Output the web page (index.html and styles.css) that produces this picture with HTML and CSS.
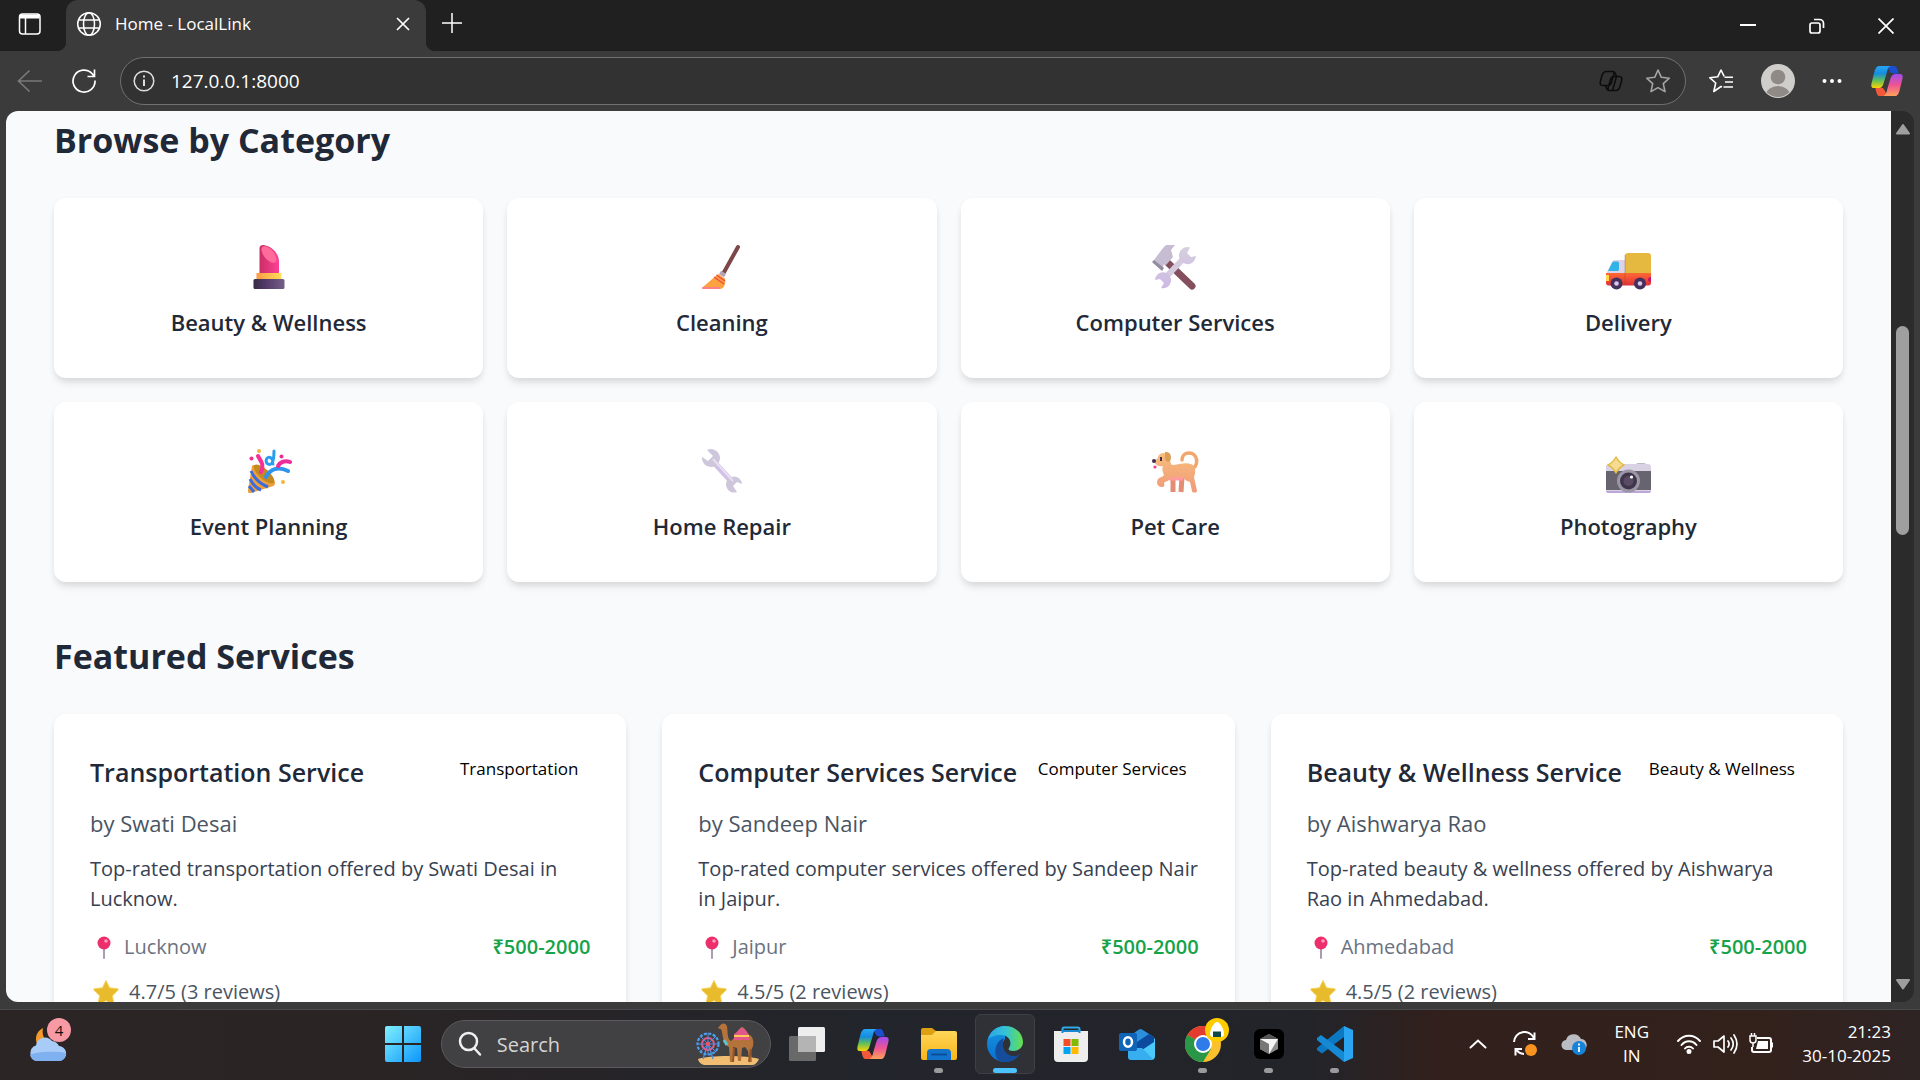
FILE: index.html
```html
<!DOCTYPE html>
<html lang="en">
<head>
<meta charset="utf-8">
<title>Home - LocalLink</title>
<link rel="stylesheet" href="styles.css">
</head>
<body>
<svg class="defs" width="0" height="0" aria-hidden="true">
  <defs>
    <linearGradient id="pink" x1="0" x2="1"><stop offset="0" stop-color="#c92f63"/><stop offset="1" stop-color="#ff4098"/></linearGradient>
    <linearGradient id="gold" x1="0" x2="1"><stop offset="0" stop-color="#ff9a45"/><stop offset="1" stop-color="#ffe05a"/></linearGradient>
    <linearGradient id="plum" x1="0" x2="1"><stop offset="0" stop-color="#382b46"/><stop offset=".4" stop-color="#543a68"/><stop offset="1" stop-color="#75608a"/></linearGradient>
    <linearGradient id="red" x1="0" x2="0" y1="0" y2="1"><stop offset="0" stop-color="#fd6a34"/><stop offset="1" stop-color="#e2303a"/></linearGradient>
    <linearGradient id="steel" x1="0" x2="0" y1="0" y2="1"><stop offset="0" stop-color="#d5cfdf"/><stop offset="1" stop-color="#cdb9e4"/></linearGradient>
    <linearGradient id="dog" x1="0" x2="0" y1="0" y2="1"><stop offset="0" stop-color="#f7bd7d"/><stop offset="1" stop-color="#f19a78"/></linearGradient>
    <linearGradient id="cpA" x1="0" x2="0" y1="0" y2="1"><stop offset="0" stop-color="#26a8f4"/><stop offset=".35" stop-color="#158ce0"/><stop offset=".65" stop-color="#5fbe5b"/><stop offset="1" stop-color="#ffd400"/></linearGradient>
    <linearGradient id="cpB" x1="0" x2="0" y1="0" y2="1"><stop offset="0" stop-color="#a04bf0"/><stop offset=".5" stop-color="#ee5593"/><stop offset="1" stop-color="#ffa25a"/></linearGradient>
    <linearGradient id="edgeA" x1="0" x2="1"><stop offset="0" stop-color="#2ea3e8"/><stop offset=".5" stop-color="#33c3d6"/><stop offset="1" stop-color="#66e04c"/></linearGradient>
    <linearGradient id="edgeB" x1="0" x2="0" y1="0" y2="1"><stop offset="0" stop-color="#1596e0"/><stop offset="1" stop-color="#0a6fd0"/></linearGradient>
    <linearGradient id="win" x1="0" x2="1" y1="0" y2="1"><stop offset="0" stop-color="#7ff0ff"/><stop offset="1" stop-color="#0d96fa"/></linearGradient>
    <linearGradient id="folder" x1="0" x2="0" y1="0" y2="1"><stop offset="0" stop-color="#ffd659"/><stop offset="1" stop-color="#f9b51a"/></linearGradient>
    <symbol id="copilot" viewBox="0 0 36 36">
      <path d="M17 2h8c3 0 3.500 2 4.500 5l1 3h-6c-3 0-4-3-5-5z" fill="#1b4fd0"/>
      <path d="M19 34h-8c-3 0-3.500-2-4.500-5l-1-4h6c3 0 4 3 5 5z" fill="#f4583a"/>
      <path d="M10 2h12c-3 1-3.500 4-4.500 8l-3 10c-1 4-3 5.500-6 5.500H4C1 25.500 1 22 2 19L5 7c1-3 2.500-5 5-5z" fill="url(#cpA)"/>
      <path d="M26 34H14c3-1 3.500-4 4.500-8l3-10c1-4 3-5.500 6-5.500H32c3 0 3 3.500 2 6.500l-3 12c-1 3-2.500 5-5 5z" fill="url(#cpB)"/>
    </symbol>
    <symbol id="pin" viewBox="0 0 24 24">
      <path d="M12 12v11" stroke="#a99bb8" stroke-width="2" stroke-linecap="round"/>
      <circle cx="12" cy="8" r="6.500" fill="#ec2f6c"/><circle cx="14" cy="6" r="1.800" fill="#ff9cbc"/>
    </symbol>
    <symbol id="star" viewBox="0 0 26 26">
      <path d="M13 1.500l3.500 7.300 8 1c.8.200 1 .8.500 1.400l-5.600 5.600 1.400 7.600c.1 1-.6 1.400-1.400 1L13 21.600l-6.400 3.800c-.8.400-1.500 0-1.400-1l1.400-7.600L1 11.200c-.5-.6-.3-1.200.5-1.400l8-1z" fill="#e8bb2c" stroke="#f7d052" stroke-width="1"/>
    </symbol>
  </defs>
</svg>

<header class="browser">
  <div class="titlebar">
    <button class="tab-actions" aria-label="Tab actions">
      <svg width="24" height="24" viewBox="0 0 24 24" fill="none" stroke="#fff" stroke-width="1.500"><rect x="1.500" y="2" width="20.500" height="20" rx="3"/><path d="M2 4.500h19.500" stroke-width="4"/><path d="M7.500 6v16"/></svg>
    </button>
    <div class="tab">
      <svg width="26" height="26" viewBox="0 0 26 26" fill="none" stroke="#fff" stroke-width="1.500"><circle cx="13" cy="13" r="11.300"/><ellipse cx="13" cy="13" rx="5.500" ry="11.300"/><path d="M3 9h20M3 17h20"/></svg>
      <span class="tab-title">Home - LocalLink</span>
      <button class="tab-close" aria-label="Close tab"><svg width="14" height="14" viewBox="0 0 14 14" stroke="#fff" stroke-width="1.700"><path d="M1 1l12 12M13 1L1 13"/></svg></button>
    </div>
    <button class="new-tab" aria-label="New tab"><svg width="22" height="22" viewBox="0 0 22 22" stroke="#fff" stroke-width="1.500"><path d="M11 1v20M1 11h20"/></svg></button>
    <div class="window-controls">
      <button aria-label="Minimize"><svg width="16" height="16" viewBox="0 0 16 16" stroke="#fff" stroke-width="2"><path d="M0 7h16"/></svg></button>
      <button aria-label="Restore"><svg width="16" height="16" viewBox="0 0 16 16" fill="none" stroke="#fff" stroke-width="1.700"><rect x="1" y="5" width="10" height="10" rx="2"/><path d="M5 1.500h5.500a4 4 0 0 1 4 4V10"/></svg></button>
      <button aria-label="Close"><svg width="16" height="16" viewBox="0 0 16 16" stroke="#fff" stroke-width="1.700"><path d="M.5.500l15 15M15.500.500l-15 15"/></svg></button>
    </div>
  </div>
  <div class="toolbar">
    <button aria-label="Back"><svg width="26" height="24" viewBox="0 0 26 24" fill="none" stroke="#7a7a7a" stroke-width="1.600"><path d="M25 12H1.500M12.500 1.500L1.500 12l11 10.500"/></svg></button>
    <button aria-label="Refresh"><svg width="26" height="26" viewBox="0 0 26 26" fill="none" stroke="#fff" stroke-width="1.700"><path d="M24 12.500A11 11 0 1 1 21 5.500l2 2.500M23.500 1.500v7H16.500"/></svg></button>
    <div class="address">
      <svg width="22" height="22" viewBox="0 0 22 22" fill="none" stroke="#ddd" stroke-width="1.500"><circle cx="11" cy="11" r="9.800"/><path d="M11 9.500V16M11 5.500v2" stroke-width="2"/></svg>
      <input class="url" type="text" aria-label="Address" value="127.0.0.1:8000">
      <button aria-label="Copilot page actions"><svg width="24" height="22" viewBox="0 0 24 22" fill="none" stroke="#0c0c0c" stroke-width="1.500"><path d="M7.500 1.500h6c2 0 1.500 2 1 4l-2 7c-.6 2-1.500 3-3.500 3H4c-3 0-3.200-2-2.500-4.500L3 5.500c.7-2.500 2-4 4.500-4zM16.500 20.500h-6c-2 0-1.500-2-1-4l2-7c.6-2 1.500-3 3.500-3h5c3 0 3.200 2 2.500 4.500L21 16.500c-.7 2.500-2 4-4.500 4zM14 1.500c2 0 2.500 2 3.500 5M10 20.500c-2 0-2.500-2-3.500-5M17.500 6.500l-4 14"/></svg></button>
      <button aria-label="Add to favorites"><svg width="26" height="26" viewBox="0 0 26 26" fill="none" stroke="#a5a5a5" stroke-width="1.600" stroke-linejoin="round"><path d="M13 2l3.300 7.300 8 .9-6 5.400 1.700 8L13 19.600l-7 4 1.700-8-6-5.400 8-.9z"/></svg></button>
    </div>
    <div class="toolbar-actions">
      <button aria-label="Favorites"><svg width="26" height="26" viewBox="0 0 26 26" fill="none" stroke="#fff" stroke-width="1.600" stroke-linejoin="round"><path d="M14 19l-1-.5-7.200 5 1.900-8.500-6-5.300 8-.9L13 2l3.200 6.300M16.500 9.200H25M17 14h8M15.500 19H25"/></svg></button>
      <button aria-label="Profile"><svg width="34" height="34" viewBox="0 0 34 34"><clipPath id="face"><circle cx="17" cy="17" r="16"/></clipPath><circle cx="17" cy="17" r="17" fill="#d0cecb"/><g clip-path="url(#face)" fill="#8f8a86"><circle cx="17" cy="13" r="7.300"/><ellipse cx="17" cy="31" rx="12" ry="9"/></g></svg></button>
      <button aria-label="Settings and more"><svg width="20" height="6" viewBox="0 0 20 6" fill="#fff"><circle cx="2.500" cy="3" r="2"/><circle cx="10" cy="3" r="2"/><circle cx="17.500" cy="3" r="2"/></svg></button>
      <button aria-label="Copilot"><svg width="36" height="34"><use href="#copilot"/></svg></button>
    </div>
  </div>
</header>

<div class="viewport">
  <main class="page">
    <section>
      <h2>Browse by Category</h2>
      <div class="categories">
        <a class="category" href="#">
          <svg viewBox="0 0 48 48"><path d="M14.500 30V5c0-2 2-3.200 4-3 8 1 15 8 15.500 16v12z" fill="url(#pink)"/><ellipse cx="24" cy="11.500" rx="5" ry="10" transform="rotate(-40 24 11.500)" fill="#ff6c9c"/><rect x="11.500" y="30" width="25" height="7" fill="url(#gold)"/><rect x="8.500" y="36" width="31" height="10" rx="1.500" fill="url(#plum)"/></svg>
          <h3>Beauty &amp; Wellness</h3>
        </a>
        <a class="category" href="#">
          <svg viewBox="0 0 48 48"><path d="M40 4L25 31" stroke="#7d4648" stroke-width="4" stroke-linecap="round"/><path d="M22 29.500l5 3" stroke="#b4a5b8" stroke-width="4"/><path d="M20 31l7 4.500c1 5-1 10.500-5 10.500H6c-1.500 0-2-1-1-2z" fill="#fca23f"/><path d="M5 45h16" stroke="#ff7f86" stroke-width="2" stroke-linecap="round"/><path d="M16 34l10 7M18.500 32l8.500 6" stroke="#f04b4b" stroke-width="1.300"/></svg>
          <h3>Cleaning</h3>
        </a>
        <a class="category" href="#">
          <svg viewBox="0 0 48 48"><path d="M17 20L41 43" stroke="#84505d" stroke-width="7" stroke-linecap="round"/><path d="M3 17l9-12 3-3h9l-4 5 2 7-7 8-2-1-2 6-9-7z" fill="#c6bdd3"/><path d="M3 17l10 8-2 3-10-9z" fill="#938ca1"/><path d="M13 36L36 12" stroke="#d4cbdf" stroke-width="6"/><path d="M39 4.500a8.500 8.500 0 1 0 6 8.500l-5 1-4-4zM10 45a8 8 0 1 0-6-8l5-1 4 4z" fill="url(#steel)"/></svg>
          <h3>Computer Services</h3>
        </a>
        <a class="category" href="#">
          <svg viewBox="0 0 48 48"><path d="M2 31l6-12c.7-1.300 1.500-2 3-2h12v15H2z" fill="#ddd2e8"/><path d="M4 28l4-8c.5-1 1-1.500 2-1.500h3c1.500 0 2 .5 2 2V26c0 1.500-.5 2-2 2z" fill="#30b4e8"/><rect x="21" y="10" width="26" height="24" rx="3" fill="#e5b840"/><path d="M2 30h45v10c0 1.500-1 2.500-2.500 2.500h-40C3 42.500 2 41.500 2 40z" fill="url(#red)"/><rect x="2" y="32" width="3" height="6" fill="#ffd84b"/><path d="M21 12v30" stroke="#7d5320" stroke-opacity=".35"/><path d="M47 34a3 2.500 0 0 0 0 5z" fill="#c4146c"/><g fill="#45305c"><circle cx="12.500" cy="40.500" r="6"/><circle cx="36" cy="40.500" r="6"/></g><g fill="#d7c7ee"><circle cx="12.500" cy="40.500" r="2.300"/><circle cx="36" cy="40.500" r="2.300"/></g></svg>
          <h3>Delivery</h3>
        </a>
        <a class="category" href="#">
          <svg viewBox="0 0 48 48"><path d="M7 19c2-5 23 8 23 17 0 2-1 3-3 3.500L6 46c-2 .5-3.500-.5-3-3z" fill="#eda03c"/><ellipse cx="19" cy="27" rx="5" ry="13" transform="rotate(-48 19 27)" fill="#c48a20"/><path d="M6 24c4 9 9 13 17 16M5 32c3 6 6 9 11 11M4 39l5 6" fill="none" stroke="#3b6be0" stroke-width="3"/><path d="M16 25c4-7-1-12-3-16" fill="none" stroke="#f52f96" stroke-width="4" stroke-linecap="round"/><path d="M21 30c4-8 12-11 22-6" fill="none" stroke="#2f94ee" stroke-width="4" stroke-linecap="round"/><path d="M29 4c0 10-2 15-6 13s-1-9 3-6 0 5 2 6" fill="none" stroke="#2b9ded" stroke-width="3" stroke-linecap="round"/><path d="M33 19c2-4 7-6 12-4" fill="none" stroke="#ec2c9b" stroke-width="4" stroke-linecap="round"/><g fill="#f6b63c"><circle cx="14" cy="4" r="2"/><circle cx="38" cy="35" r="2"/></g><g fill="#ea2f90"><circle cx="6.500" cy="11.500" r="2"/><circle cx="36.500" cy="9.500" r="2"/></g></svg>
          <h3>Event Planning</h3>
        </a>
        <a class="category" href="#">
          <svg viewBox="0 0 48 48"><path d="M13 12l23 25" stroke="#d1c1e6" stroke-width="6"/><path d="M9 3a9 9 0 1 1-5 7l6 4 5-5zM39 45a8 8 0 1 1 5-8l-5-2-4 4z" fill="#cec6da"/><path d="M15 12l20 22" stroke="#e8e0f0" stroke-width="2"/></svg>
          <h3>Home Repair</h3>
        </a>
        <a class="category" href="#">
          <svg viewBox="0 0 48 48"><path d="M41 22c7-4 6-16-3-16-5 0-7 4-7 7" fill="none" stroke="#f2a66c" stroke-width="3.500" stroke-linecap="round"/><path d="M22 30v15M31 30l-1 15" stroke="#e38d72" stroke-width="5"/><path d="M3 14c1-1 3-1 4-4 1-4 6-5 10-3 3 2 1 8 4 11 6 0 13-3 19-1 5 2 5 8 3 13l3 14c0 2-5 2-5 0l-2-9c-3-1-5-2-7-4H22c-2 0-3 1-4 2-2 2-4 1-5 3 1 3 0 4-2 4-5 0-6-5-4-8 2-2 5-2 6-4-2-4-2-7-1-9-4 1-8-1-9-5z" fill="url(#dog)"/><path d="M14 5c6-1 7 5 5 9-2 2-5 0-5-3z" fill="#dc9e57"/><circle cx="3" cy="14" r="2" fill="#42304b"/><path d="M10 10v4" stroke="#42304b" stroke-width="2"/><circle cx="4" cy="20" r="1.600" fill="#ef4286"/><path d="M18 32h14" stroke="#ff9ba0" stroke-width="3"/></svg>
          <h3>Pet Care</h3>
        </a>
        <a class="category" href="#">
          <svg viewBox="0 0 48 48"><rect x="32" y="16" width="10" height="5" rx="2" fill="#bdb8c4"/><rect x="2" y="17" width="45" height="29" rx="3" fill="#d8d2e4"/><path d="M2 24h45v19H2z" fill="#67636f"/><path d="M2 44h45c-.3 1.500-1 2-2.500 2h-40C3 46 2.300 45.500 2 44z" fill="#bba7da"/><circle cx="24.500" cy="34" r="11.500" fill="#9c97a6"/><circle cx="24.500" cy="34" r="8.500" fill="#40364b"/><circle cx="24.500" cy="34" r="5" fill="#594b64"/><circle cx="27.500" cy="30" r="1.600" fill="#fff"/><path d="M12 10c2 4 4 6 8 8-4 2-6 4-8 8-2-4-4-6-8-8 4-2 6-4 8-8z" fill="#f6dc92" stroke="#e3bc45" stroke-width="1.500" stroke-linejoin="round"/></svg>
          <h3>Photography</h3>
        </a>
      </div>
    </section>
    <section>
      <h2>Featured Services</h2>
      <div class="services">
        <article class="service">
          <div class="service-head"><h3>Transportation Service</h3><span class="tag">Transportation</span></div>
          <p class="provider">by Swati Desai</p>
          <p class="description">Top-rated transportation offered by Swati Desai in Lucknow.</p>
          <div class="facts"><span class="place"><svg><use href="#pin"/></svg>Lucknow</span><span class="price">₹500-2000</span></div>
          <div class="rating"><svg><use href="#star"/></svg>4.7/5 (3 reviews)</div>
        </article>
        <article class="service">
          <div class="service-head"><h3>Computer Services Service</h3><span class="tag">Computer Services</span></div>
          <p class="provider">by Sandeep Nair</p>
          <p class="description">Top-rated computer services offered by Sandeep Nair in Jaipur.</p>
          <div class="facts"><span class="place"><svg><use href="#pin"/></svg>Jaipur</span><span class="price">₹500-2000</span></div>
          <div class="rating"><svg><use href="#star"/></svg>4.5/5 (2 reviews)</div>
        </article>
        <article class="service">
          <div class="service-head"><h3>Beauty &amp; Wellness Service</h3><span class="tag">Beauty &amp; Wellness</span></div>
          <p class="provider">by Aishwarya Rao</p>
          <p class="description">Top-rated beauty &amp; wellness offered by Aishwarya Rao in Ahmedabad.</p>
          <div class="facts"><span class="place"><svg><use href="#pin"/></svg>Ahmedabad</span><span class="price">₹500-2000</span></div>
          <div class="rating"><svg><use href="#star"/></svg>4.5/5 (2 reviews)</div>
        </article>
      </div>
    </section>
  </main>
  <div class="scrollbar" aria-hidden="true">
    <svg width="16" height="12" viewBox="0 0 16 12"><path d="M8 2l6 8.500H2z" fill="#9f9f9f" stroke="#9f9f9f" stroke-width="2" stroke-linejoin="round"/></svg>
    <div class="track"><div class="thumb"></div></div>
    <svg width="16" height="12" viewBox="0 0 16 12"><path d="M8 10.500L2 2h12z" fill="#9f9f9f" stroke="#9f9f9f" stroke-width="2" stroke-linejoin="round"/></svg>
  </div>
</div>

<footer class="taskbar">
  <div class="widgets">
    <button class="weather" aria-label="Weather, 4 notifications">
      <svg width="40" height="40" viewBox="0 0 40 40"><path d="M15 4c-2 10 5 18 15 18-3 7-14 7-19 1S7 8 15 4z" fill="#f59a2c"/><path d="M9 37a8 8 0 0 1-1-15.500A9 9 0 0 1 24 17a9 9 0 0 1 7 5c10 1 9 15 0 15z" fill="#a9cbf7"/><path d="M9 37a8 8 0 0 1-7-6c6-4 29-4 36-2-1 5-3 8-7 8z" fill="#7fb0ef"/></svg>
      <span class="badge">4</span>
    </button>
  </div>
  <nav class="apps" aria-label="Taskbar">
    <button class="app" aria-label="Start"><svg width="36" height="36" viewBox="0 0 36 36" fill="url(#win)"><path d="M2 0h15v17H0V2a2 2 0 0 1 2-2zM19 0h15a2 2 0 0 1 2 2v15H19zM0 19h17v17H2a2 2 0 0 1-2-2zM19 19h17v15a2 2 0 0 1-2 2H19z"/></svg></button>
    <label class="search">
      <svg width="24" height="26" viewBox="0 0 24 26" fill="none" stroke="#f0f0f0" stroke-width="2.500" stroke-linecap="round"><circle cx="10.500" cy="10.500" r="8.500"/><path d="M16.500 17.500l5.500 6"/></svg>
      <input type="search" placeholder="Search" aria-label="Search">
      <svg width="64" height="46" viewBox="0 0 64 46"><path d="M2 38c10-4 50-4 61 0-2 4-4 6-7 6H10c-4 0-7-2-8-6z" fill="#f0bd72"/><path d="M7 38l5-16 5 16" fill="none" stroke="#4d8fe0" stroke-width="1.300"/><g fill="none"><circle cx="12" cy="23" r="10.500" stroke="#4d9ff0" stroke-width="2.200" stroke-dasharray="3 1.500"/><circle cx="12" cy="23" r="6" stroke="#e0598e" stroke-width="2"/><path d="M12 12v22M1 23h22M4 15l16 16M20 15L4 31" stroke="#4d8fe0"/></g><circle cx="12" cy="23" r="2.200" fill="#f04f6a"/><path d="M23 6c2-4 6-5 8-1 1 7 0 13 4 15l5-5c2-4 4-9 6-9s4 4 6 7c5 2 6 7 5 12l-2 5 1 11h-3l-1-11-3-4-3 1-1 13h-3l-1-13-4-1v15h-3l-1-15c-5-2-6-8-7-15l-1-3c-2 0-4-1-2-2z" fill="#b5733c"/><path d="M38 27l-1 14M55 28l-2 13" stroke="#945628" stroke-width="2"/><path d="M38 13c4-2 5-6 8-6s5 4 7 7l1 5H38z" fill="#e2578a"/><path d="M38 15h15" stroke="#ffca55" stroke-width="2"/><path d="M28 19l3 5" stroke="#5cc3cf" stroke-width="3"/></svg>
    </label>
    <button class="app" aria-label="Task view"><svg width="36" height="36" viewBox="0 0 36 36"><rect x="9" y="1" width="27" height="25" rx="1.500" fill="#eee"/><rect x="0" y="10" width="27" height="25" rx="1.500" fill="#767676" fill-opacity=".85"/><path d="M9 10h18v16H9z" fill="#b4b4b4"/></svg></button>
    <button class="app" aria-label="Copilot"><svg width="34" height="34"><use href="#copilot"/></svg></button>
    <button class="app running" aria-label="File Explorer"><svg width="36" height="36" viewBox="0 0 36 36"><path d="M0 4a2 2 0 0 1 2-2h9l4 3v5H0z" fill="#dda012"/><path d="M0 9h11l4-4h19a2 2 0 0 1 2 2v25a2 2 0 0 1-2 2H2a2 2 0 0 1-2-2z" fill="url(#folder)"/><path d="M6 34V27a4 4 0 0 1 4-4h16a4 4 0 0 1 4 4v7z" fill="#1273cc"/><path d="M11 28.500h14" stroke="#0a4e98" stroke-width="2" stroke-linecap="round"/></svg></button>
    <button class="app running active" aria-label="Edge"><svg width="36" height="36" viewBox="0 0 36 36"><path d="M18 0C8 0 0 8 0 18s8 18 18 18c4 0 8-1.500 11-4-8 1-14-4-14-11 0-3 1-6 3-8z" fill="url(#edgeB)"/><path d="M11 34C6 28 8 15 17 12c-3 5-1 17 9 18 3 .3 5-.5 7.500-2.500C30 34 18 39 11 34z" fill="#134d9c"/><path d="M1 14C3 5 10 0 18 0c11 0 18 8 18 16 0 6-5 9-10 9-4 0-5-1.500-4-3 4-7-1-13-8-13C8 9 3 11 1 14z" fill="url(#edgeA)"/></svg></button>
    <button class="app" aria-label="Microsoft Store"><svg width="36" height="36" viewBox="0 0 36 36"><path d="M9.500 10V3a1.500 1.500 0 0 1 1.500-1.500h14A1.500 1.500 0 0 1 26.500 3v7" fill="none" stroke="#2fa9e8" stroke-width="2"/><path d="M1 5h34v27a4 4 0 0 1-4 4H5a4 4 0 0 1-4-4z" fill="#eee"/><path d="M9.500 7V5h17v2" fill="none" stroke="#1989cf" stroke-width="2"/><path d="M10.500 13h7v7h-7z" fill="#f25022"/><path d="M18.500 13h7v7h-7z" fill="#7fba00"/><path d="M10.500 21h7v7h-7z" fill="#00a4ef"/><path d="M18.500 21h7v7h-7z" fill="#ffb900"/></svg></button>
    <button class="app" aria-label="Outlook"><svg width="36" height="36" viewBox="0 0 36 36"><path d="M9 11L20 3.500c1-.7 2-.7 3 0L35 11 20 24 9 18z" fill="#2b8fdc"/><path d="M36 12v18a4 4 0 0 1-4 4H12z" fill="#4bc9f8"/><path d="M9 22L30 8l5 3v5L14 30z" fill="#0b4a9e"/><path d="M9 22h14l11 11-2 1H12a3 3 0 0 1-3-3z" fill="#37aef0"/><rect y="7" width="18" height="18" rx="2" fill="#0f64b8"/><ellipse cx="9" cy="16" rx="4" ry="4.700" fill="none" stroke="#fff" stroke-width="2.500"/></svg></button>
    <button class="app running" aria-label="Chrome"><svg width="36" height="36" viewBox="0 0 36 36"><circle cx="18" cy="18" r="18" fill="#fbc02d"/><path d="M18 18L2.400 9A18 18 0 0 1 33.600 9z" fill="#e33b2e"/><path d="M18 18L2.400 9A18 18 0 0 0 18 36l8-13z" fill="#2a9648"/><circle cx="18" cy="18" r="9" fill="#fff"/><circle cx="18" cy="18" r="7" fill="#2f7bea"/></svg><svg class="profile-badge" width="24" height="24" viewBox="0 0 24 24"><circle cx="12" cy="12" r="12" fill="#ffcc00"/><path d="M12 4c3 0 7 7 7 12 0 2-1 3-3 3H8c-2 0-3-1-3-3 0-5 4-12 7-12z" fill="#fff"/><path d="M8 13.500h8V19H8z" fill="#0c4a48"/></svg></button>
    <button class="app running" aria-label="Cursor"><svg width="30" height="30" viewBox="0 0 30 30"><rect width="30" height="30" rx="6" fill="#000"/><path d="M15 5l9 5v10l-9 5-9-5V10z" fill="#8d8d8d"/><path d="M6 10l9 4.500V25l-9-5z" fill="#777"/><path d="M6 10h18l-9 15V15z" fill="#f5f5f5"/><path d="M6 10l9-5 9 5z" fill="#555"/></svg></button>
    <button class="app running" aria-label="Visual Studio Code"><svg width="36" height="36" viewBox="0 0 36 36"><path d="M27 0v11L5 27.500 0 24v-2z" fill="#0c78c2"/><path d="M0 12l4-3 23 17v10L0 14z" fill="#1589d4"/><path d="M27 0l9 4v28l-9 4z" fill="#2aa5f2"/></svg></button>
  </nav>
  <div class="tray">
    <button aria-label="Show hidden icons"><svg width="18" height="10" viewBox="0 0 18 10" fill="none" stroke="#fff" stroke-width="2" stroke-linecap="round"><path d="M1.500 8.500L9 1.500l7.500 7"/></svg></button>
    <button aria-label="Update"><svg width="26" height="26" viewBox="0 0 26 26" fill="none" stroke="#fff" stroke-width="2"><path d="M2 11A10.500 10.500 0 0 1 22 7M22.500 1.500V8H16M3.500 24.500V18H10M4 18a10 10 0 0 0 8 5"/><circle cx="19" cy="19" r="6" fill="#f7931e" stroke="none"/></svg></button>
    <button aria-label="OneDrive"><svg width="26" height="24" viewBox="0 0 26 24"><path d="M6 18a5 5 0 0 1-1-10 8 8 0 0 1 15-1 6 6 0 0 1 3 11z" fill="#b9bcc2"/><circle cx="18" cy="16" r="7" fill="#1683d8"/><path d="M18 15v5M18 11.500v2" stroke="#fff" stroke-width="1.800"/></svg></button>
    <button class="language">ENG<br>IN</button>
    <button class="quick" aria-label="Network, volume and battery">
      <svg width="26" height="22" viewBox="0 0 26 22" fill="none" stroke="#fff" stroke-width="2" stroke-linecap="round"><path d="M2 8c6-7 16-7 22 0M5.500 12c4-5 11-5 15 0M9 15.500c2-2.500 6-2.500 8 0"/><circle cx="13" cy="18.500" r="1.500" fill="#fff"/></svg>
      <svg width="26" height="24" viewBox="0 0 26 24" fill="none" stroke="#fff" stroke-width="2" stroke-linecap="round" stroke-linejoin="round"><path d="M2 9v6h4l6 5V4L6 9zM16 9c1.500 2 1.500 4 0 6M19 6c3 4 3 8 0 12M22 3c4 6 4 12 0 18" stroke-width="1.700"/></svg>
      <svg width="26" height="24" viewBox="0 0 26 24" fill="none" stroke="#fff" stroke-width="2"><path d="M9 6h12a2 2 0 0 1 2 2v10a2 2 0 0 1-2 2H6a2 2 0 0 1-2-2v-3M24 10.500v5"/><path d="M10 9h10v8H8z" fill="#fff" stroke="none"/><path d="M2 4v4a3 3 0 0 0 6 0V4zM3.500 4V1M6.500 4V1M5 11v4" stroke-width="1.500"/></svg>
    </button>
    <button class="clock">21:23<br>30-10-2025</button>
  </div>
</footer>
</body>
</html>
```
FILE: styles.css
```css
* {
  box-sizing: border-box;
}

html,
body {
  height: 100%;
}

body {
  margin: 0;
  display: flex;
  flex-direction: column;
  overflow: hidden;
  background: #3b3b3b;
  font-family: "Open Sans", "Noto Sans", sans-serif;
}

button {
  display: flex;
  align-items: center;
  justify-content: center;
  padding: 0;
  border: 0;
  background: none;
  color: inherit;
  font: inherit;
}

svg {
  display: block;
  flex: none;
}

h2,
h3,
p {
  margin: 0;
}

.defs {
  position: absolute;
}

/* Browser frame */
.titlebar {
  display: flex;
  height: 51px;
  background: #202020;
  color: #fff;
}

.tab-actions {
  width: 60px;
  padding-bottom: 3px;
}

.tab {
  position: relative;
  display: flex;
  align-items: center;
  gap: 13px;
  width: 360px;
  margin-left: 6px;
  padding: 0 16px 4px 10px;
  border-radius: 12px 12px 0 0;
  background: #3b3b3b;
  font-size: 17px;
}

.tab::before,
.tab::after {
  content: "";
  position: absolute;
  bottom: 0;
  width: 10px;
  height: 10px;
}

.tab::before {
  right: 100%;
  background: radial-gradient(circle at 0 0, #202020 10px, #3b3b3b 11px);
}

.tab::after {
  left: 100%;
  background: radial-gradient(circle at 100% 0, #202020 10px, #3b3b3b 11px);
}

.tab-title {
  flex: 1;
}

.new-tab {
  width: 52px;
  padding-bottom: 5px;
}

.window-controls {
  display: flex;
  margin-left: auto;
}

.window-controls button {
  width: 69px;
}

.toolbar {
  display: flex;
  align-items: center;
  height: 60px;
  padding: 0 15px 0 16px;
}

.toolbar > button {
  width: 28px;
  margin-right: 26px;
}

.toolbar > button + button {
  margin-right: 22px;
}

.address {
  display: flex;
  flex: 1;
  align-items: center;
  gap: 22px;
  height: 48px;
  padding: 0 14px 0 12px;
  border: 1px solid #707070;
  border-radius: 24px;
  background: #323232;
}

.url {
  flex: 1;
  min-width: 0;
  padding: 0;
  border: 0;
  outline: 0;
  background: none;
  color: #fff;
  font: 19px "Open Sans", "Noto Sans", sans-serif;
  line-height: 30px;
}

.address svg + .url {
  margin-left: -6px;
}

.toolbar-actions {
  display: flex;
  align-items: center;
  gap: 27px;
  margin-left: 22px;
}

/* Page */
.viewport {
  display: flex;
  flex: 1;
  min-height: 0;
  margin: 0 6px 7px;
  border-radius: 12px;
  overflow: hidden;
}

.page {
  flex: 1;
  padding: 7px 48px 0;
  overflow: hidden;
  background: #f9fafc;
  color: #1f2937;
}

.page section + section {
  margin-top: 52px;
}

h2 {
  margin-bottom: 35px;
  font-size: 34px;
  line-height: 45px;
  font-weight: 700;
}

.categories {
  display: grid;
  grid-template-columns: repeat(4, 1fr);
  gap: 24px;
}

.category,
.service {
  border-radius: 12px;
  background: #fff;
  box-shadow: 0 6px 9px -2px rgba(0, 0, 0, 0.12), 0 2px 6px rgba(0, 0, 0, 0.04);
}

.category {
  display: flex;
  flex-direction: column;
  align-items: center;
  padding: 45px 36px 38px;
  color: inherit;
  text-decoration: none;
}

.category svg {
  width: 48px;
  height: 48px;
  margin-bottom: 13px;
}

.category h3 {
  font-size: 22px;
  line-height: 36px;
  font-weight: 600;
}

.services {
  display: grid;
  grid-template-columns: repeat(3, 1fr);
  gap: 36px;
}

.service {
  padding: 37px 36px 36px;
}

.service-head {
  display: flex;
  align-items: flex-start;
  justify-content: space-between;
  margin-bottom: 12px;
}

.service-head h3 {
  font-size: 25px;
  line-height: 42px;
  font-weight: 600;
  white-space: nowrap;
}

.tag {
  padding: 4px 12px;
  color: #000;
  font-size: 17px;
  line-height: 28px;
  white-space: nowrap;
}

.provider {
  margin-bottom: 13px;
  color: #4b5563;
  font-size: 22px;
  line-height: 36px;
}

.description {
  margin-bottom: 18px;
  color: #374151;
  font-size: 20px;
  line-height: 30px;
}

.facts {
  display: flex;
  justify-content: space-between;
  margin-bottom: 15px;
  font-size: 20px;
  line-height: 30px;
}

.place,
.rating {
  display: flex;
  align-items: center;
}

.place {
  gap: 8px;
  color: #6b7280;
}

.place svg {
  width: 24px;
  height: 24px;
  margin-left: 2px;
}

.price {
  color: #16a34a;
  font-weight: 600;
}

.rating {
  gap: 10px;
  color: #4b5563;
  font-size: 20px;
  line-height: 30px;
}

.rating svg {
  width: 26px;
  height: 26px;
  margin-left: 3px;
}

.scrollbar {
  display: flex;
  flex-direction: column;
  align-items: center;
  width: 23px;
  padding: 12px 0;
  background: #2b2b2b;
}

.track {
  flex: 1;
  padding-top: 191px;
}

.thumb {
  width: 13px;
  height: 31%;
  min-height: 209px;
  border-radius: 7px;
  background: #9f9f9f;
}

/* Taskbar */
.taskbar {
  display: flex;
  align-items: center;
  height: 71px;
  padding-bottom: 2px;
  border-top: 1px solid #4a4a4c;
  background: linear-gradient(90deg, #2b2526 0%, #2a2425 20%, #22252b 45%, #22242a 68%, #32201c 75%, #33211c 92%, #2e2424 100%);
  color: #fff;
}

.widgets {
  flex: 0 0 19%;
  padding-left: 28px;
}

.weather {
  position: relative;
}

.badge {
  position: absolute;
  top: -6px;
  right: -3px;
  width: 24px;
  border-radius: 12px;
  background: #f79aa4;
  color: #111;
  font-size: 15px;
  line-height: 24px;
}

.apps {
  display: flex;
  align-items: center;
  gap: 6px;
  padding-left: 8px;
}

.app {
  position: relative;
  width: 60px;
  height: 60px;
  border-radius: 6px;
}

.app.active {
  border: 1px solid #3f4045;
  background: #303137;
}

.app.running::after {
  content: "";
  position: absolute;
  bottom: 1px;
  width: 9px;
  height: 5px;
  border-radius: 3px;
  background: #9a9a9c;
}

.app.running.active::after {
  bottom: 0;
  width: 24px;
  background: #4cc2ff;
}

.profile-badge {
  position: absolute;
  top: 4px;
  right: 4px;
}

.search {
  display: flex;
  align-items: center;
  width: 330px;
  height: 48px;
  margin-left: 2px;
  padding: 0 10px 0 16px;
  border: 1px solid #5c5a5c;
  border-radius: 24px;
  background: #414042;
}

.search input {
  flex: 1;
  min-width: 0;
  margin-left: 15px;
  padding: 0;
  border: 0;
  outline: 0;
  background: none;
  color: #d4d4d4;
  font: 20px "Open Sans", "Noto Sans", sans-serif;
}

.search input::placeholder {
  color: #d4d4d4;
  opacity: 1;
}

.tray {
  display: flex;
  align-items: center;
  gap: 23px;
  margin-left: auto;
  padding-right: 29px;
  font-size: 17px;
  line-height: 24px;
}

.tray > button:first-child {
  margin-right: 2px;
}

.language {
  margin: 0 4px;
}

.quick {
  gap: 10px;
}

.clock {
  justify-content: flex-end;
  min-width: 94px;
  text-align: right;
}
```
